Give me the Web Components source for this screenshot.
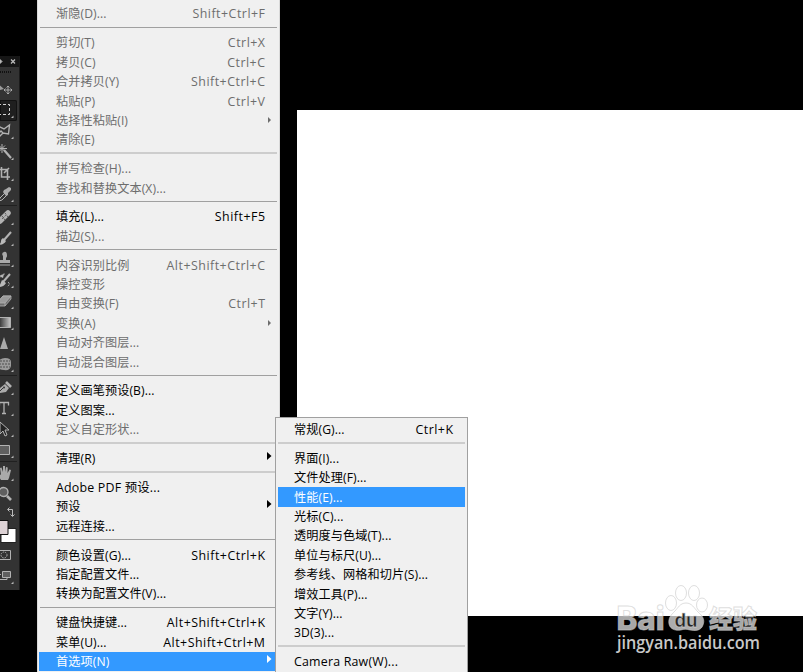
<!DOCTYPE html>
<html lang="zh-CN">
<head>
<meta charset="utf-8">
<title>首选项</title>
<style>
  html, body { margin: 0; height: 100%; overflow: hidden; background: #000; }
</style>
</head>
<body>
<photo-desktop></photo-desktop>
<script>
(function() {
  const define = (name, css, render) => {
    customElements.define(name, class extends HTMLElement {
      constructor() {
        super();
        this.attachShadow({ mode: 'open' });
      }

      connectedCallback() {
        this.shadowRoot.innerHTML = `<style>${css}</style>${render(this)}`;
      }
    });
  };

  // each icon lives in a 20x21 cell, cut off by the left edge of the window
  const icons = {
    move: '<path d="M-4 3v11l4-3 4-1z" fill="#aaa" stroke="none"/><path d="M8 7v8M4 11h8M6.500 8.500 8 7l1.500 1.500M6.500 13.500 8 15l1.500-1.500M5.500 9.500 4 11l1.500 1.500M10.500 9.500 12 11l-1.500 1.500" stroke-width=".9"/>',
    marquee: '<path d="M-2 4.500H9.500V14.500H-2" stroke="#eee" stroke-dasharray="3 2"/>',
    lasso: '<path d="M-2 5 4 8l5.500-4-1 9-5.500-1-4 4M3 12l-2-2-3 3" stroke-width="1.400"/>',
    wand: '<path d="m4 8 7 8" stroke-width="2.200"/><path d="M2 2v9M-2 6.500H7M-1 3.500l6 6M5 3.500l-6 6" stroke-width="1"/>',
    crop: '<path d="M1.500 4v10H10M-2 6.500H7.500V17M4 10l5-5" stroke-width="1.600"/>',
    dropper: '<path d="m-1 17 1-3 6-6 2 2-6 6z"/><path d="m4 6 2-1 3-2 2 1v2l-3 3v2L6 12 3 8z" fill="#bbb" stroke="none"/>',
    heal: '<path d="m0 14 8-8" stroke-width="5.500" stroke-linecap="round"/><path d="m2 12 4-4M2 9l3 4M5 6l3 4" stroke="#444" stroke-dasharray="1 1"/>',
    brush: '<path d="m4 12 7-8" stroke-width="2"/><path d="M3 10 6 13q-2 4-8 4 3-1 3-4 0-2 2-3z" fill="#ccc" stroke="none"/>',
    stamp: '<path d="M3 9V7Q1 4 4 3t3 4q0 1-1 2v2h4v3H-2v-3h5zM-2 15.500h12v1H-2z" fill="#bbb" stroke="none"/>',
    history: '<path d="m3 12 7-8" stroke-width="2"/><path d="m2 10 4 3q-2 4-7 4zM-1 6l5-2-1 4z" fill="#ccc" stroke="none"/><path d="M8 12q3 2-1 5M-1 9q2-5 6-5" stroke-dasharray="2 1"/>',
    eraser: '<path d="m-3 12 6-7h8v3l-6 7h-8z" fill="#777" stroke-width=".8"/><path d="m-3 12 6-7h8l-6 7zM5 12v3" fill="#aaa" stroke-width=".8"/>',
    gradient: '<path d="M-2 5.500h12.500v10H-2z" fill="url(#g)"/>',
    blur: '<path d="m4 4 4 12H0z" fill="#bbb" stroke="none"/>',
    sponge: '<path d="M-2 8q2-4 7-4 6 0 6 4v4q-1 5-7 4-6 0-6-4z" fill="#aaa" stroke="none"/><path d="M0 7h10M-1 10h11M0 13h10" stroke="#555" stroke-dasharray="2 1"/>',
    pen: '<path d="m-2 17 2-6 5-4 4 4-3 4-6 1z" fill="#bbb" stroke="none"/><path d="m6 5 5 5" stroke-width="2.600"/><path d="m-1 15 4-4" stroke="#333"/><circle cx="4" cy="10.500" r="1" fill="#333" stroke="none"/>',
    type: '<path d="M-.5 7.500v-3h9v3M4 4.500v11M2 15.500h4" stroke-width="1.300"/>',
    select: '<path d="M0 3v12l3-3 2 5 2-1-2-5h4z" fill="#222"/>',
    rect: '<path d="M-2 5.500H9.500v9H-2z" fill="#666"/>',
    hand: '<path d="m1 17-4-6 1-1 3 2L0 5l1.500-.5L3 9V3h2v6l1-5 1.700.5L7.500 10l2-3.500L11 7l-2 8-1 2z" fill="#bbb" stroke="none"/>',
    zoom: '<circle cx="3.500" cy="8" r="4.500" fill="#666" stroke-width="1.400"/><path d="m7 12 4 4" stroke-width="2.600"/>',
    mask: '<path d="M-2 5.500h12.500v9H-2z"/><circle cx="4" cy="10" r="3" stroke-dasharray="1.500 1"/>',
    screen: '<path d="M2.500 5.500h8v6h-8z" fill="#666"/><path d="M1 8.500h-3v5h9v-1.500"/>'
  };

  define('tool-button', `
    :host { display: block; flex: none; width: 20px; height: 21px; }
    :host([active]) svg { background: #1f1f1f; border-radius: 0 2px 2px 0; box-shadow: inset 0 0 0 1px #121212; width: 17px; }
    svg { display: block; width: 20px; height: 21px; }
    g { opacity: .88; }
  `, el => {
    const name = el.getAttribute('name');
    const corner = el.hasAttribute('plain') ? '' : '<path d="M13.500 15.500V18H11z" fill="#ccc" stroke="none"/>';
    return `<svg viewBox="0 0 ${el.hasAttribute('active') ? 17 : 20} 21" fill="none" stroke="#c4c4c4">
      <defs><linearGradient id="g"><stop stop-color="#222"/><stop offset="1" stop-color="#ddd"/></linearGradient></defs>
      <g>${icons[name]}${corner}</g></svg>`;
  });

  const tools = names => names.map(n =>
    `<tool-button name="${n}" ${n === 'marquee' ? 'active' : ''} ${/move|zoom|mask/.test(n) ? 'plain' : ''}></tool-button>`).join('');

  define('tool-box', `
    :host { display: flex; flex-direction: column; width: 20px; height: 534px; background: #333; border-right: 1px solid #1a1a1a; box-sizing: border-box; overflow: hidden; }
    header { flex: none; height: 11px; background: #161616; }
    .grip { flex: none; height: 2px; margin: 4px 7px 6px 0; background: repeating-linear-gradient(90deg, #111 0 1px, #333 1px 2px); }
    hr { flex: none; width: 17px; height: 1px; margin: 0 0 1px; border: 0; background: #202020; }
    svg { display: block; flex: none; }
  `, () => `
    <header><svg width="20" height="11" fill="none" stroke="#bbb"><path d="m0 3.500 2 2-2 2z" fill="#bbb"/><path d="m11 3.500 4 4m0-4-4 4" stroke-width="1.300"/></svg></header>
    <div class="grip"></div>
    ${tools(['move', 'marquee', 'lasso', 'wand', 'crop', 'dropper'])}<hr>
    ${tools(['heal', 'brush', 'stamp', 'history', 'eraser', 'gradient', 'blur', 'sponge'])}<hr>
    ${tools(['pen', 'type', 'select', 'rect'])}<hr>
    ${tools(['hand', 'zoom'])}
    <svg width="20" height="40" fill="none">
      <path d="M8 4.500h4.500V11M9.500 2.500l-2 2 2 2M10.500 9.500l2 2 2-2" stroke="#bbb"/>
      <path d="M1 23.500h15v14H1z" fill="#fff" stroke="#222"/>
      <path d="M-1 15.500H8v14h-9z" fill="#ddd2d5" stroke="#111"/>
    </svg>
    ${tools(['mask', 'screen'])}
  `);

  define('menu-row', `
    :host { display: flex; align-items: center; box-sizing: border-box; height: 19.4px; flex: none; padding: 0 12px 0 16px; color: #000; white-space: pre; }
    :host([off]) { color: #6d6d6d; }
    :host([on]) { background: #3399ff; color: #fff; }
    :host([latin]) { font-size: 12.4px; letter-spacing: .2px; }
    .key { margin-left: auto; font-size: 12.4px; letter-spacing: .5px; margin-right: -.5px; }
    svg { margin: -5px -7px 0 auto; }
    :host([off]) svg { margin-top: 0; }
  `, el => {
    let end = '';
    if (el.hasAttribute('key')) end = `<span class="key">${el.getAttribute('key')}</span>`;
    if (el.hasAttribute('sub')) {
      end = el.hasAttribute('off')
        ? '<svg width="4" height="6" fill="currentColor"><path d="M0 0l3 3-3 3z"/></svg>'
        : '<svg width="5" height="8" fill="currentColor"><path d="M0 0l4.500 4L0 8z"/></svg>';
    }
    return `<span><slot></slot></span>${end}`;
  });

  define('menu-line', `
    :host { display: flex; align-items: center; flex: none; height: 9.480px; }
    i { flex: 1; height: 1px; margin-bottom: 2px; background: #a0a0a0; }
    :host([soft]) i { height: 2px; background: #cdcdcd; }
  `, () => '<i></i>');

  define('menu-panel', `
    :host {
      display: flex;
      flex-direction: column;
      box-sizing: border-box;
      background: #f0f0f0;
      border: 1px solid #a0a0a0;
      overflow: hidden;
      font: 12.150px/19px "Open Sans", "Noto Sans CJK SC", sans-serif;
      letter-spacing: .1px;
    }
  `, () => '<slot></slot>');

  // row: [label, shortcut, flags]; '-' is a thin line, '=' a soft one
  const rows = list => list.map(r => {
    if (r === '-') return '<menu-line></menu-line>';
    if (r === '=') return '<menu-line soft></menu-line>';
    const [label, key, flags] = r;
    return `<menu-row ${key ? `key="${key}"` : ''} ${flags || ''}>${label}</menu-row>`;
  }).join('');

  const edit = [
    ['渐隐(D)...', 'Shift+Ctrl+F', 'off'], '-',
    ['剪切(T)', 'Ctrl+X', 'off'],
    ['拷贝(C)', 'Ctrl+C', 'off'],
    ['合并拷贝(Y)', 'Shift+Ctrl+C', 'off'],
    ['粘贴(P)', 'Ctrl+V', 'off'],
    ['选择性粘贴(I)', '', 'off sub'],
    ['清除(E)', '', 'off'], '=',
    ['拼写检查(H)...', '', 'off'],
    ['查找和替换文本(X)...', '', 'off'], '-',
    ['填充(L)...', 'Shift+F5'],
    ['描边(S)...', '', 'off'], '-',
    ['内容识别比例', 'Alt+Shift+Ctrl+C', 'off'],
    ['操控变形', '', 'off'],
    ['自由变换(F)', 'Ctrl+T', 'off'],
    ['变换(A)', '', 'off sub'],
    ['自动对齐图层...', '', 'off'],
    ['自动混合图层...', '', 'off'], '-',
    ['定义画笔预设(B)...'],
    ['定义图案...'],
    ['定义自定形状...', '', 'off'], '=',
    ['清理(R)', '', 'sub'], '=',
    ['Adobe PDF 预设...', '', 'latin'],
    ['预设', '', 'sub'],
    ['远程连接...'], '-',
    ['颜色设置(G)...', 'Shift+Ctrl+K'],
    ['指定配置文件...'],
    ['转换为配置文件(V)...'], '-',
    ['键盘快捷键...', 'Alt+Shift+Ctrl+K'],
    ['菜单(U)...', 'Alt+Shift+Ctrl+M'],
    ['首选项(N)', '', 'on sub']
  ];

  const prefs = [
    ['常规(G)...', 'Ctrl+K'], '=',
    ['界面(I)...'],
    ['文件处理(F)...'],
    ['性能(E)...', '', 'on'],
    ['光标(C)...'],
    ['透明度与色域(T)...'],
    ['单位与标尺(U)...'],
    ['参考线、网格和切片(S)...'],
    ['增效工具(P)...'],
    ['文字(Y)...'],
    ['3D(3)...'], '=',
    ['Camera Raw(W)...', '', 'latin']
  ];

  define('site-mark', `
    :host { display: block; width: 150px; height: 80px; }
    svg { display: block; overflow: visible; }
  `, () => `
    <svg width="150" height="80" fill="#fff" fill-opacity=".68" stroke="#c8c8c8" stroke-opacity=".6">
      <g font-family="Inter, sans-serif" font-weight="800">
        <text x="1.500" y="50" font-size="32" textLength="48" lengthAdjust="spacingAndGlyphs">Bai</text>
        <ellipse cx="56" cy="23" rx="5.500" ry="7.500"/>
        <ellipse cx="66" cy="13" rx="5.500" ry="7.500"/>
        <ellipse cx="79" cy="13" rx="5.500" ry="7.500"/>
        <ellipse cx="87" cy="25" rx="5.500" ry="7"/>
        <path d="M71 23c6 0 8 5 12 9 5 4 7 8 5 13-2 6-8 6-13 5-4-1-6-1-9 0-6 1-11-1-12-6-1-6 2-9 6-13 3-3 5-8 11-8z"/>
        <text x="59.500" y="46.500" font-size="19" font-weight="700" fill="#111" fill-opacity=".9" stroke="#ddd" stroke-width=".8" textLength="23" lengthAdjust="spacingAndGlyphs">du</text>
      </g>
      <text x="94" y="47.500" font-size="24.500" font-weight="900" font-family="Noto Sans CJK SC, sans-serif" textLength="48" lengthAdjust="spacingAndGlyphs">经验</text>
      <text x="2" y="69" font-size="17.500" font-weight="600" font-family="Open Sans, sans-serif" fill="#c8c8c8" fill-opacity="1" stroke="none" textLength="143" lengthAdjust="spacingAndGlyphs">jingyan.baidu.com</text>
    </svg>
  `);

  define('photo-desktop', `
    :host { display: block; position: relative; width: 803px; height: 672px; overflow: hidden; box-sizing: border-box; padding: 110px 0 0 297px; background: #000; }
    .sheet { height: 506px; background: #fff; }
    tool-box, menu-panel, site-mark { position: absolute; }
    tool-box { left: 0; top: 56px; }
    .edit { left: 37px; top: -1px; width: 243px; height: 680px; padding: 4.300px 2px 0; border-color: #d9d9d9; }
    .edit menu-row[on] { margin: 0 -1px; padding: 0 13px 0 17px; }
    .prefs { left: 275px; top: 417px; width: 193px; height: 262px; padding: 1.800px 2px 0; }
    site-mark { left: 615px; top: 580px; }
  `, () => `
    <div class="sheet"></div>
    <tool-box></tool-box>
    <menu-panel class="edit">${rows(edit)}</menu-panel>
    <menu-panel class="prefs">${rows(prefs)}</menu-panel>
    <site-mark></site-mark>
  `);
})();
</script>
</body>
</html>
